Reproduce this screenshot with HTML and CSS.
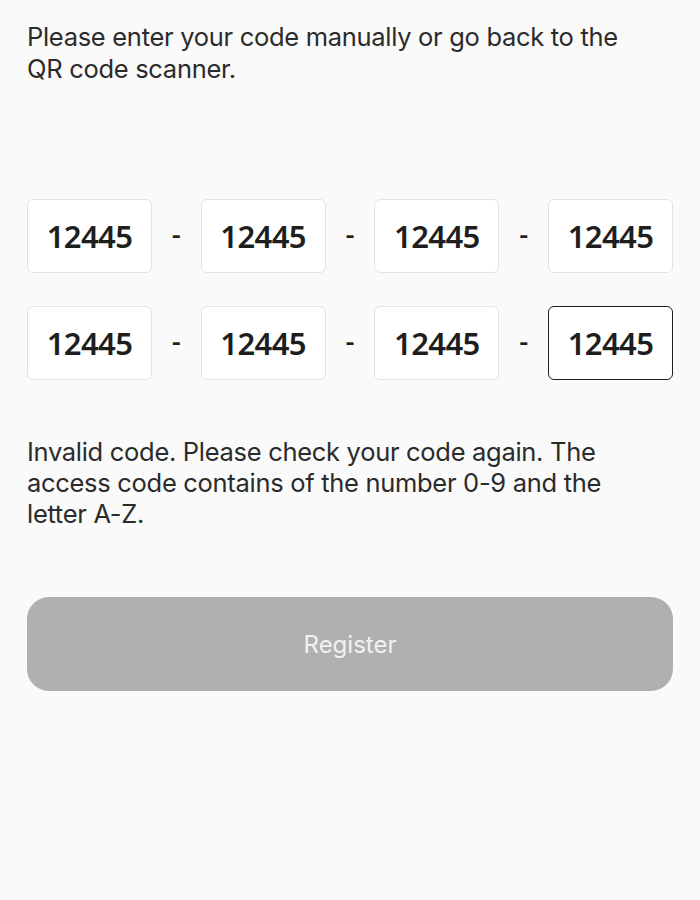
FILE: index.html
```html
<!DOCTYPE html>
<html lang="en">
<head>
<meta charset="utf-8">
<title>Enter code</title>
<link rel="stylesheet" href="styles.css">
</head>
<body>
<main class="page">
  <p class="intro">Please enter your code manually or go back to the QR code scanner.</p>
  <div class="codes">
    <div class="code-row">
      <div class="cell">12445</div><span class="sep">-</span>
      <div class="cell">12445</div><span class="sep">-</span>
      <div class="cell">12445</div><span class="sep">-</span>
      <div class="cell">12445</div>
    </div>
    <div class="code-row">
      <div class="cell">12445</div><span class="sep">-</span>
      <div class="cell">12445</div><span class="sep">-</span>
      <div class="cell">12445</div><span class="sep">-</span>
      <div class="cell active">12445</div>
    </div>
  </div>
  <p class="error">Invalid code. Please check your code again. The access code contains of the number 0-9 and the letter A-Z.</p>
  <button class="register" type="button">Register</button>
</main>
</body>
</html>
```
FILE: styles.css
```css
html, body {
  margin: 0;
  padding: 0;
  background: #fafafa;
}
body {
  font-family: "Inter", "Liberation Sans", sans-serif;
  color: #2b2b2b;
}
.page {
  padding: 21px 27px 0 27px;
  display: flex;
  flex-direction: column;
}
.intro {
  margin: 0;
  font-size: 25.5px;
  line-height: 32px;
  letter-spacing: -0.3px;
  max-width: 615px;
}
.codes {
  margin-top: 114px;
  display: flex;
  flex-direction: column;
  gap: 33px;
}
.code-row {
  display: flex;
  align-items: center;
}
.cell {
  width: 125px;
  height: 74px;
  box-sizing: border-box;
  border: 1.5px solid #e3e3e3;
  border-radius: 6px;
  background: #ffffff;
  display: flex;
  align-items: center;
  justify-content: center;
  font-family: "Noto Sans", sans-serif;
  font-weight: 600;
  font-size: 31px;
  color: #1e1e1e;
  letter-spacing: -0.6px;
}
.cell.active {
  border: 1.5px solid #1f1f1f;
}
.sep {
  flex: 1;
  text-align: center;
  font-family: "Noto Sans", sans-serif;
  font-size: 28px;
  font-weight: 500;
  color: #1e1e1e;
  margin-top: -6px;
}
.error {
  margin: 56px 0 0 0;
  font-size: 25.5px;
  line-height: 31px;
  letter-spacing: -0.3px;
  max-width: 615px;
}
.register {
  margin-top: 68px;
  height: 94px;
  border: none;
  border-radius: 22px;
  background: #b0b0b0;
  color: #f2f2f2;
  font-family: "Inter", "Liberation Sans", sans-serif;
  font-size: 24px;
  width: 100%;
}
```
